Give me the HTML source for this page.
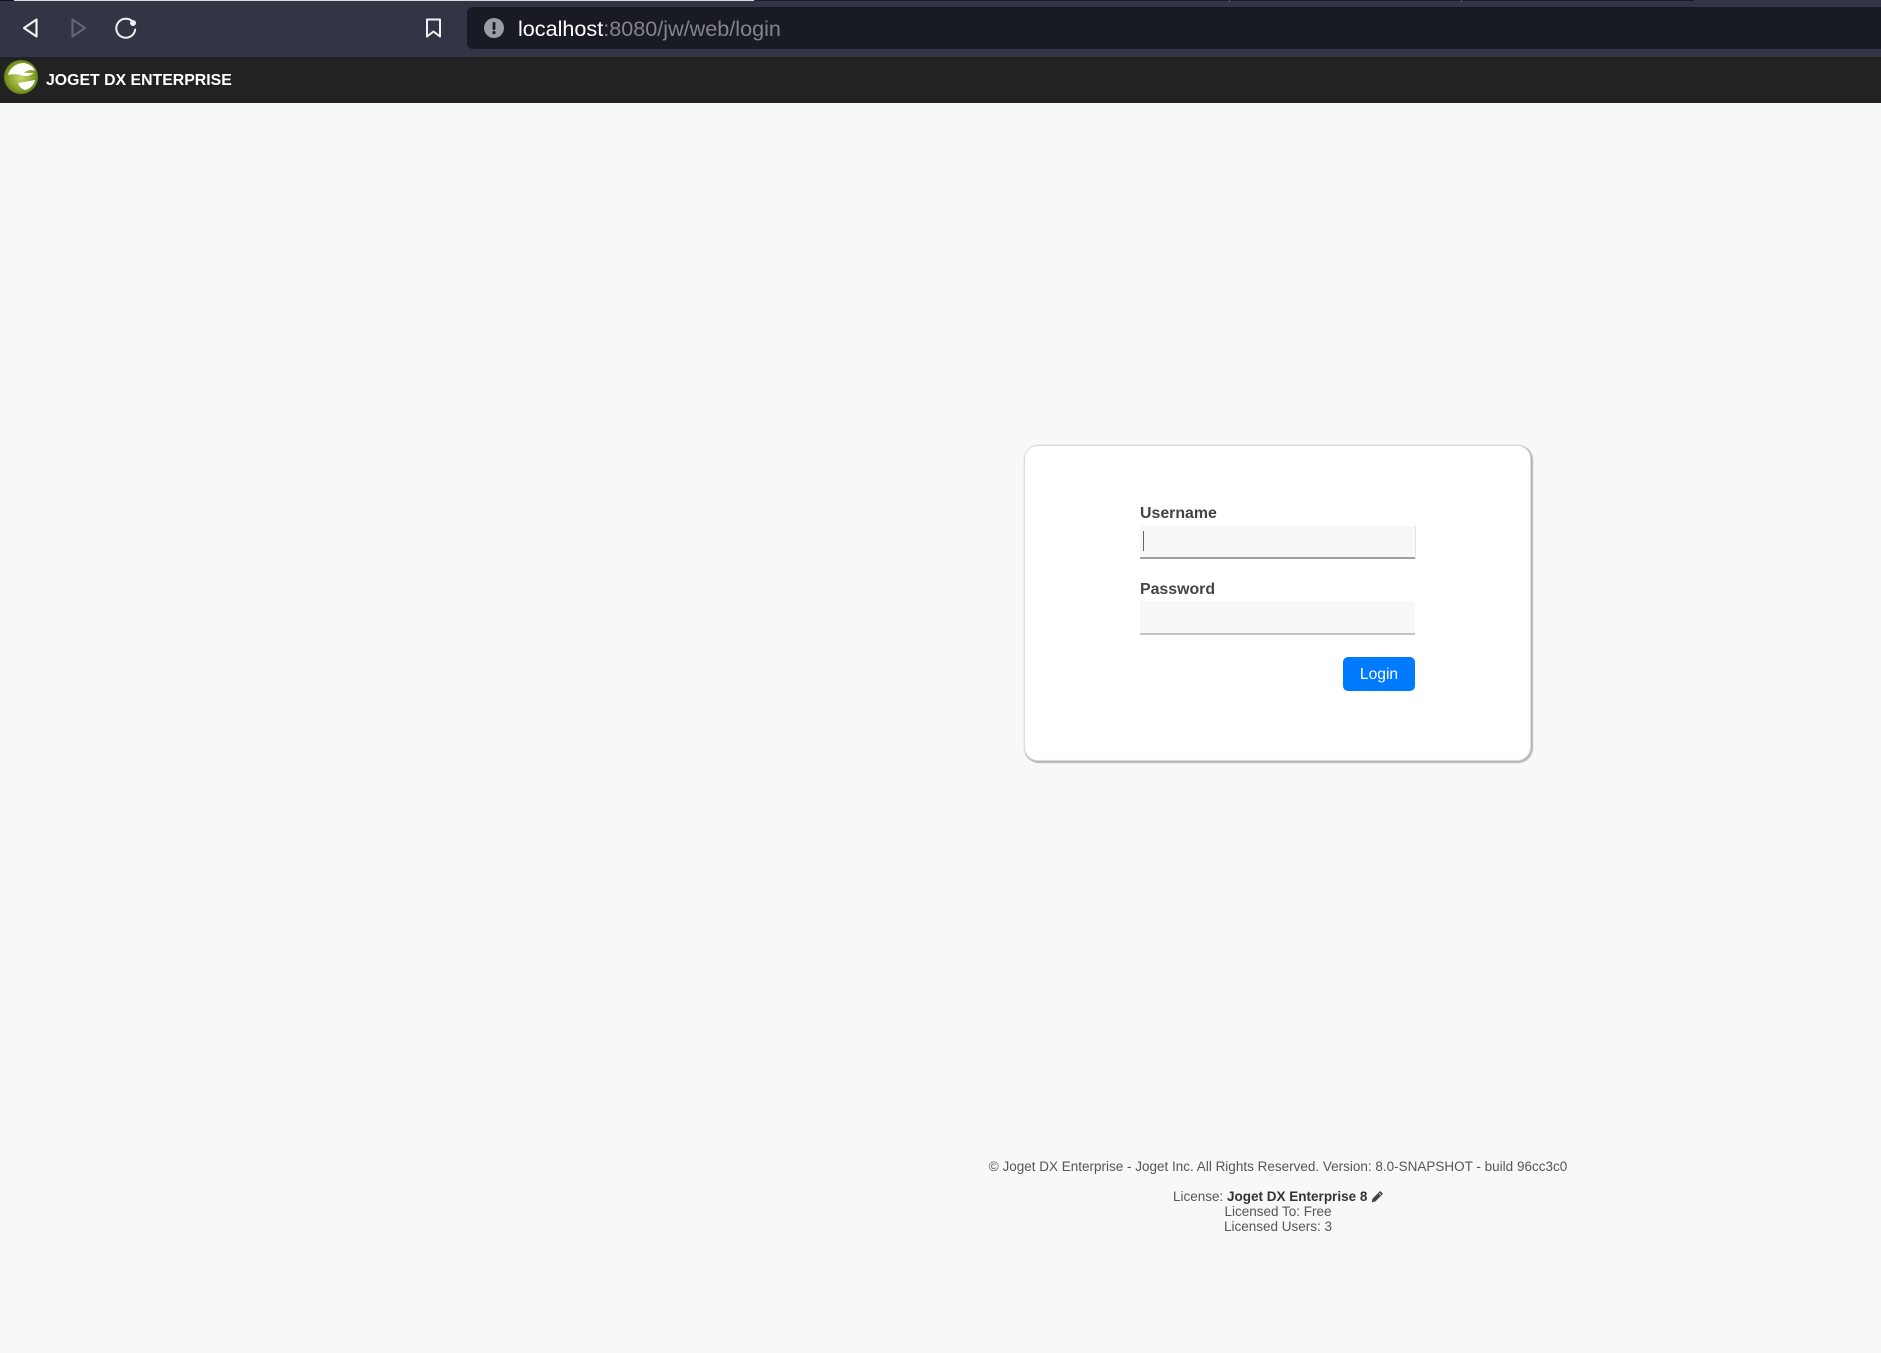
<!DOCTYPE html>
<html>
<head>
<meta charset="utf-8">
<style>
html,body{margin:0;padding:0;width:1881px;height:1353px;overflow:hidden;background:#f7f9f8;font-family:"Liberation Sans",sans-serif;}
.a{position:absolute;white-space:nowrap;}
</style>
</head>
<body>
<div class="a" style="left:0;top:0;width:1881px;height:57px;background:#313545;"></div>
<div class="a" style="left:0;top:0;width:14px;height:1px;background:#14151c;"></div>
<div class="a" style="left:14px;top:0;width:740px;height:1px;background:#d8d9dc;"></div>
<div class="a" style="left:754px;top:0;width:940px;height:1px;background:#1a1c28;"></div>
<div class="a" style="left:1229px;top:0;width:1px;height:2px;background:#555865;"></div>
<div class="a" style="left:1461px;top:0;width:1px;height:2px;background:#555865;"></div>

<svg class="a" style="left:0;top:0" width="520" height="57" viewBox="0 0 520 57" fill="none">
  <path d="M36.5 19.5V36.5L24 28Z" stroke="#f2f2f4" stroke-width="2.2" stroke-linejoin="round"/>
  <path d="M72.5 19.5V36.5L85 28Z" stroke="#636674" stroke-width="2.2" stroke-linejoin="round"/>
  <path d="M132.5 21.5A9.5 9.5 0 1 0 135.2 29.5" stroke="#f2f2f4" stroke-width="2" stroke-linecap="round"/>
  <circle cx="133" cy="23" r="3" fill="#f2f2f4"/>
  <path d="M427 19.5H440V36.5L433.5 31.5L427 36.5Z" stroke="#f2f2f4" stroke-width="2" stroke-linejoin="round"/>
</svg>

<div class="a" style="left:467px;top:7px;width:1414px;height:42px;background:#181b24;border-radius:6px 0 0 6px;"></div>
<svg class="a" style="left:484px;top:18px" width="20" height="20" viewBox="0 0 20 20">
  <circle cx="10" cy="10" r="10" fill="#9a9da6"/>
  <rect x="8.6" y="4" width="2.8" height="8" rx="1" fill="#181b24"/>
  <circle cx="10" cy="14.6" r="1.6" fill="#181b24"/>
</svg>
<div class="a" style="left:518px;top:16px;font-size:21.6px;line-height:26px;color:#ffffff;">localhost<span style="color:#83858b;">:8080/jw/web/login</span></div>

<div class="a" style="left:0;top:57px;width:1881px;height:46px;background:#222222;"></div>
<svg class="a" style="left:4px;top:60px" width="34" height="34" viewBox="0 0 34 34">
  <defs>
    <radialGradient id="g" cx=".5" cy=".5" r=".55">
      <stop offset="0" stop-color="#c8d66a"/>
      <stop offset=".65" stop-color="#8aa52a"/>
      <stop offset="1" stop-color="#5a7a18"/>
    </radialGradient>
  </defs>
  <circle cx="17" cy="17" r="17" fill="url(#g)"/>
  <path d="M4 15C6 8 12 3 20 3C25 4 29 6 31 11C27 9 23 10 20 13L30 13C26 16 21 17 17 15C12 14 8 14 4 15Z" fill="#fff"/>
  <path d="M14 23C20 22 26 21 31 20C30 25 26 29 21 30C17 29 15 26 14 23Z" fill="#fff"/>
</svg>
<div class="a" style="left:46px;top:71px;font-size:15.85px;line-height:20px;font-weight:bold;color:#ffffff;">JOGET DX ENTERPRISE</div>

<div class="a" style="left:1024px;top:445px;width:505px;height:314px;background:#fff;border:1px solid #dcdcdc;border-radius:14px;box-shadow:1px 1px 1px 1px #b5b5b5;"></div>

<div class="a" style="left:1140px;top:504px;font-size:15.9px;line-height:20px;font-weight:bold;color:#444;">Username</div>
<div class="a" style="left:1140px;top:526px;width:275px;height:31px;background:#f8f8f8;border-bottom:2px solid #a0a0a0;box-shadow:1px 0 0 #e4e4e4;"></div>
<div class="a" style="left:1143px;top:531px;width:1px;height:20px;background:#666;"></div>

<div class="a" style="left:1140px;top:580px;font-size:15.9px;line-height:20px;font-weight:bold;color:#444;">Password</div>
<div class="a" style="left:1140px;top:601px;width:275px;height:32px;background:#f8f8f8;border-bottom:2px solid #c4c4c4;"></div>

<div class="a" style="left:1343px;top:657px;width:72px;height:34px;background:#007bff;border-radius:5px;color:#fff;font-size:15.6px;line-height:35px;text-align:center;">Login</div>

<div class="a" style="left:878px;top:1159px;width:800px;text-align:center;font-size:13.5px;line-height:16px;color:#555;">© Joget DX Enterprise - Joget Inc. All Rights Reserved. Version: 8.0-SNAPSHOT - build 96cc3c0</div>
<div class="a" style="left:1173px;top:1189px;font-size:13.5px;line-height:16px;color:#555;">License: <b style="color:#333;">Joget DX Enterprise 8</b></div>
<svg class="a" style="left:1371px;top:1190px" width="13" height="13" viewBox="0 0 13 13">
  <path d="M9.2 1L12 3.8L4.2 11.6L0.8 12.2L1.4 8.8Z" fill="#444"/>
  <path d="M8 3.2L9.8 5" stroke="#f7f9f8" stroke-width=".8"/>
</svg>
<div class="a" style="left:878px;top:1204px;width:800px;text-align:center;font-size:13.5px;line-height:15px;color:#555;">Licensed To: Free</div>
<div class="a" style="left:878px;top:1219px;width:800px;text-align:center;font-size:13.5px;line-height:15px;color:#555;">Licensed Users: 3</div>
</body>
</html>
